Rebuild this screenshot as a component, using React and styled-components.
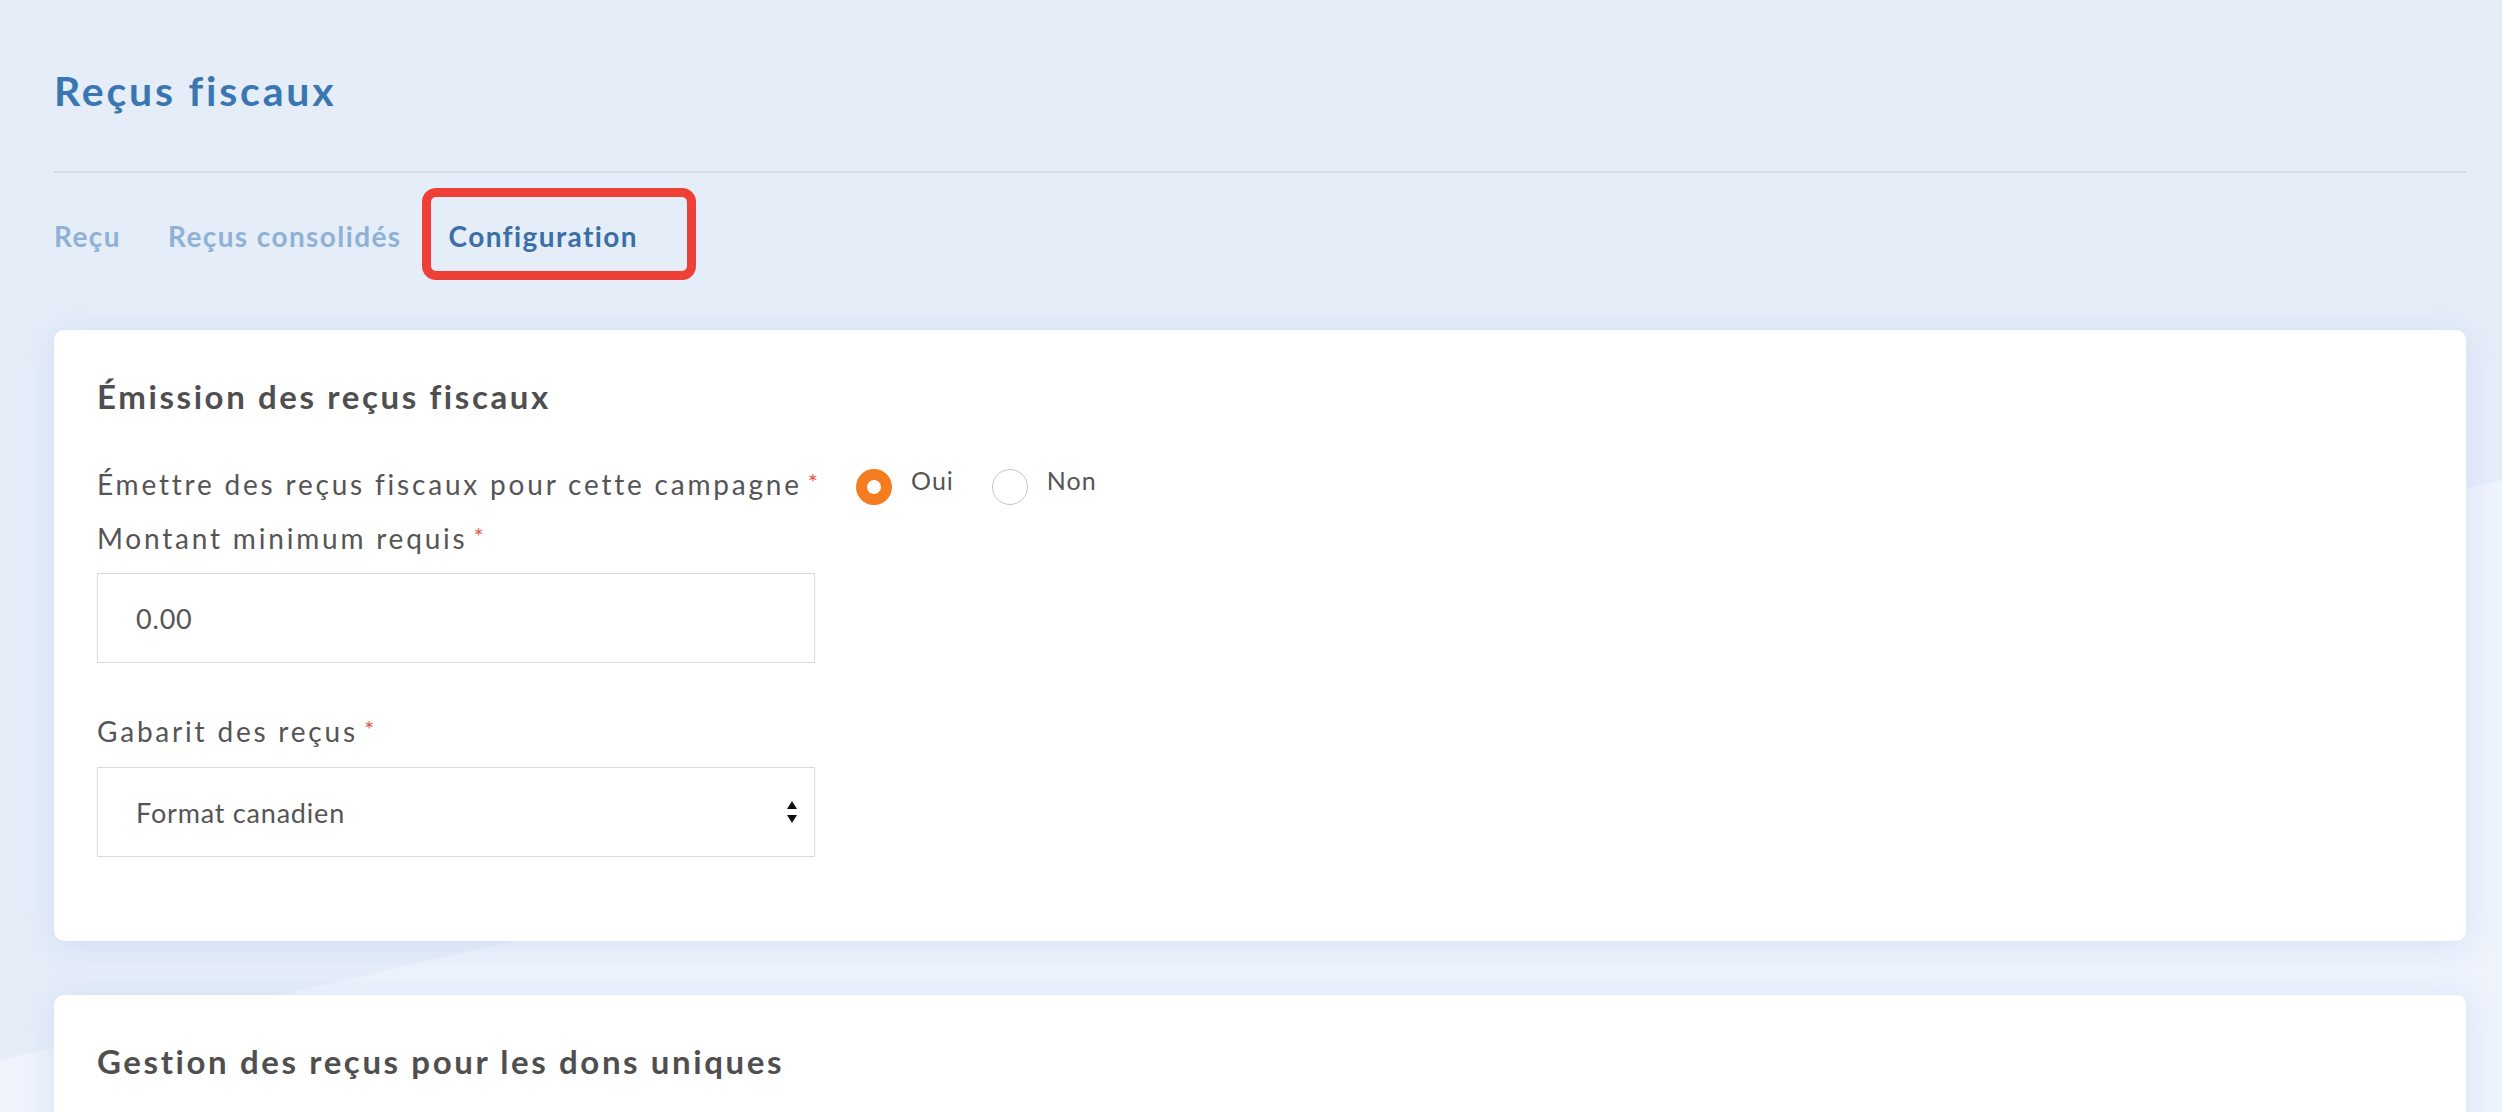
import React from "react";
import styled, { createGlobalStyle } from "styled-components";

const GlobalStyle = createGlobalStyle`
  html {
    background-color: #eef3fc;
    background-image: linear-gradient(166.95deg, #e5edf8 62.6%, #eef3fc 62.7%);
    background-size: 100% 1112px;
    background-repeat: no-repeat;
  }
  body {
    margin: 0;
    font-family: Lato, "Open Sans", Arial, sans-serif;
    color: #555;
    -webkit-font-smoothing: antialiased;
  }
  * { box-sizing: border-box; }
`;

const Page = styled.div`
  padding: 67px 36px 0 54px;
`;

const Title = styled.h1`
  margin: 0;
  font-size: 41px;
  line-height: 48px;
  font-weight: 700;
  letter-spacing: 2.8px;
  color: #3a76b2;
`;

const Divider = styled.hr`
  margin: 56px 0 0;
  border: 0;
  height: 2px;
  background: #d3dbe7;
`;

const Tabs = styled.nav`
  display: flex;
  gap: 47px;
  margin-top: 46px;
`;

const Tab = styled.span`
  position: relative;
  font-size: 28px;
  line-height: 34px;
  font-weight: 700;
  letter-spacing: 1.4px;
  color: ${(p) => (p.$active ? "#3a6fa7" : "#8fb1d6")};
`;

const Highlight = styled.span`
  position: absolute;
  left: -27px;
  right: -58px;
  top: -31px;
  bottom: -27px;
  border: 9px solid #ee4036;
  border-radius: 14px;
  pointer-events: none;
`;

const Card = styled.section`
  margin-top: ${(p) => p.$mt}px;
  background: #ffffff;
  border-radius: 10px;
  box-shadow: 0 4px 30px rgba(150, 180, 230, 0.28);
  padding: 47px 43px ${(p) => p.$pb}px;
`;

const CardTitle = styled.h2`
  margin: 0 0 50px;
  font-size: 33px;
  line-height: 38px;
  font-weight: 700;
  letter-spacing: 2.6px;
  color: #4f4f4f;
`;

const Row = styled.div`
  display: flex;
  align-items: flex-start;
`;

const Label = styled.label`
  display: block;
  font-size: 28px;
  line-height: 34px;
  font-weight: 400;
  letter-spacing: 2.8px;
  color: #555;
  margin-top: ${(p) => p.$mt || 0}px;
`;

const Star = styled.span`
  color: #e2594e;
  font-size: 24px;
  letter-spacing: 0;
  margin-left: 6px;
  vertical-align: 4px;
`;

const RadioGroup = styled.div`
  display: flex;
  gap: 38px;
  margin-left: 38px;
`;

const RadioOption = styled.div`
  display: flex;
  align-items: flex-start;
  gap: 19px;
`;

const RadioCircle = styled.span`
  display: block;
  width: 36px;
  height: 36px;
  margin-top: 4px;
  border-radius: 50%;
  background: #fff;
  border: ${(p) => (p.$checked ? "11.5px solid #f57c1f" : "1px solid #c4c4c4")};
`;

const RadioText = styled.span`
  font-size: 25px;
  line-height: 30px;
  letter-spacing: 1px;
  color: #555;
`;

const Input = styled.div`
  margin-top: ${(p) => p.$mt}px;
  width: 718px;
  height: ${(p) => p.$h}px;
  border: 1px solid #d9dde3;
  background: #fff;
  display: flex;
  align-items: center;
  justify-content: space-between;
  padding: 0 16px 0 38px;
  font-size: 27px;
  letter-spacing: 0.8px;
  color: #555;
`;

const Arrows = () => (
  <svg width="12" height="24" viewBox="0 0 12 24" aria-hidden="true">
    <path d="M6 1 L11 9 L1 9 Z" fill="#111" />
    <path d="M1 15 L11 15 L6 23 Z" fill="#111" />
  </svg>
);

export default function App() {
  return (
    <>
      <GlobalStyle />
      <Page>
        <Title>Reçus fiscaux</Title>
        <Divider />
        <Tabs>
          <Tab>Reçu</Tab>
          <Tab>Reçus consolidés</Tab>
          <Tab $active>
            Configuration
            <Highlight />
          </Tab>
        </Tabs>

        <Card $mt={77} $pb={84}>
          <CardTitle>Émission des reçus fiscaux</CardTitle>
          <Row>
            <Label>
              Émettre des reçus fiscaux pour cette campagne<Star>*</Star>
            </Label>
            <RadioGroup>
              <RadioOption>
                <RadioCircle $checked />
                <RadioText>Oui</RadioText>
              </RadioOption>
              <RadioOption>
                <RadioCircle />
                <RadioText>Non</RadioText>
              </RadioOption>
            </RadioGroup>
          </Row>
          <Label $mt={14}>
            Montant minimum requis<Star>*</Star>
          </Label>
          <Input $mt={18} $h={90}>0.00</Input>
          <Label $mt={49}>
            Gabarit des reçus<Star>*</Star>
          </Label>
          <Input $mt={19} $h={90}>
            <span>Format canadien</span>
            <Arrows />
          </Input>
        </Card>

        <Card $mt={54} $pb={160}>
          <CardTitle>Gestion des reçus pour les dons uniques</CardTitle>
        </Card>
      </Page>
    </>
  );
}
